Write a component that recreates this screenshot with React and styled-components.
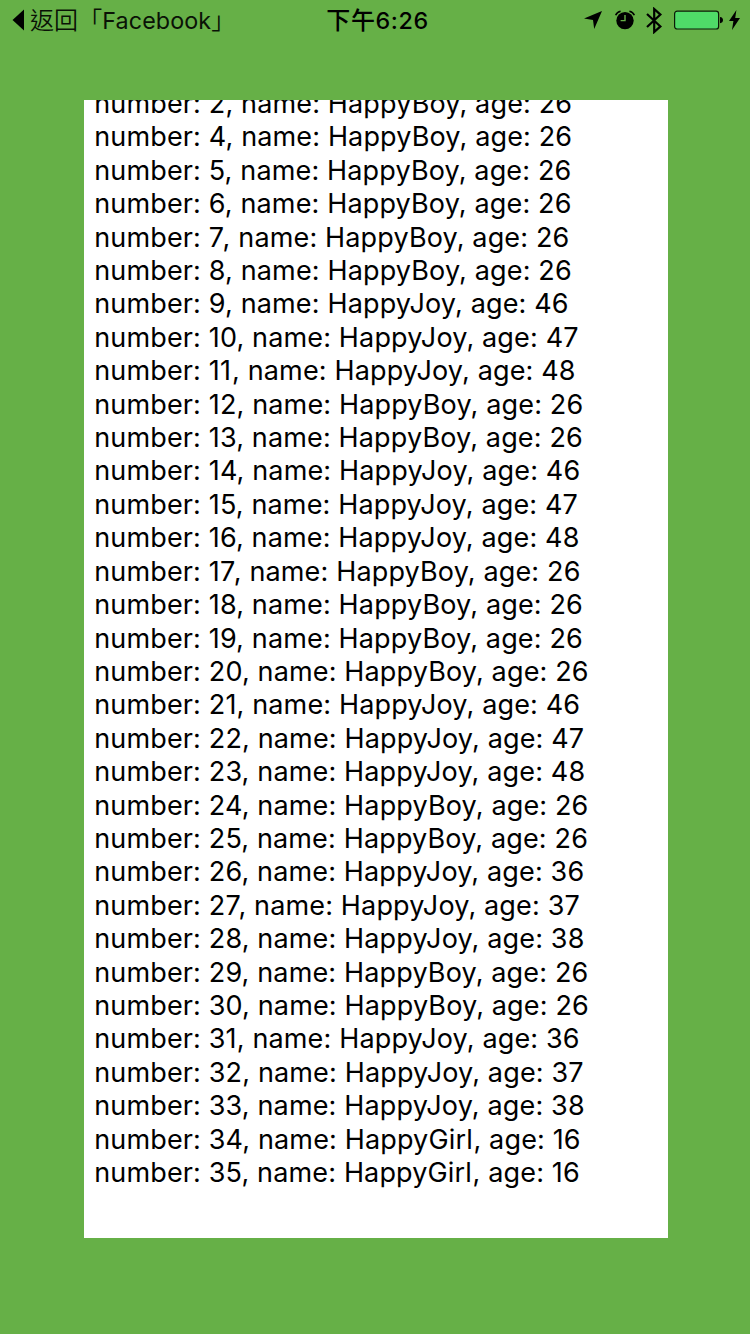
import React from 'react';
import styled, { createGlobalStyle } from 'styled-components';

const GlobalStyle = createGlobalStyle`
  html, body { margin: 0; padding: 0; }
  body { background: #66b047; }
`;

const Screen = styled.div`
  box-sizing: border-box;
  width: 750px;
  height: 1334px;
  overflow: hidden;
  background: #66b047;
  color: #000;
  font-family: Inter, "Noto Sans CJK TC", sans-serif;
`;

const StatusBar = styled.header`
  box-sizing: border-box;
  display: grid;
  grid-template-columns: 1fr auto 1fr;
  align-items: center;
  height: 40px;
  padding: 0 10px 0 12px;
`;

const BackLink = styled.div`
  display: flex;
  align-items: center;
  gap: 6px;
  height: 40px;
  color: #0a1206;
  font-size: 23.3px;
  font-weight: 400;
  line-height: 38px;
  letter-spacing: 0.1px;
  white-space: nowrap;
`;

const BackLabel = styled.span`
  height: 40px;
`;

const Han = styled.span`
  font-family: "Noto Sans CJK TC", sans-serif;
  font-weight: ${(p) => p.$weight};
  font-size: 24px;
`;

const Clock = styled.div`
  height: 40px;
  padding-left: 3px;
  font-size: 23.3px;
  font-weight: 550;
  line-height: 38px;
  letter-spacing: 0.6px;
  white-space: nowrap;
`;

const Indicators = styled.div`
  display: flex;
  align-items: center;
  justify-content: flex-end;
  height: 40px;
`;

const Glyph = styled.svg`
  display: block;
  flex: none;
  margin-left: ${(p) => p.$gap || 0}px;
`;

const Log = styled.main`
  box-sizing: border-box;
  display: flex;
  flex-direction: column;
  justify-content: flex-end;
  width: 584px;
  height: 1138px;
  margin: 60px 0 0 84px;
  padding: 0 10px 48.6px;
  overflow: hidden;
  background: #fff;
`;

const Entry = styled.div`
  flex: none;
  height: 33.42px;
  padding-left: 0.2px;
  font-size: 27px;
  line-height: 33.42px;
  letter-spacing: 0.15px;
  white-space: pre;
`;

const Field = styled.span`
  margin-right: ${(p) => p.$trail || 0}px;
`;

const records = [
  [2, 'HappyBoy', 26], [4, 'HappyBoy', 26], [5, 'HappyBoy', 26], [6, 'HappyBoy', 26],
  [7, 'HappyBoy', 26], [8, 'HappyBoy', 26], [9, 'HappyJoy', 46], [10, 'HappyJoy', 47],
  [11, 'HappyJoy', 48], [12, 'HappyBoy', 26], [13, 'HappyBoy', 26], [14, 'HappyJoy', 46],
  [15, 'HappyJoy', 47], [16, 'HappyJoy', 48], [17, 'HappyBoy', 26], [18, 'HappyBoy', 26],
  [19, 'HappyBoy', 26], [20, 'HappyBoy', 26], [21, 'HappyJoy', 46], [22, 'HappyJoy', 47],
  [23, 'HappyJoy', 48], [24, 'HappyBoy', 26], [25, 'HappyBoy', 26], [26, 'HappyJoy', 36],
  [27, 'HappyJoy', 37], [28, 'HappyJoy', 38], [29, 'HappyBoy', 26], [30, 'HappyBoy', 26],
  [31, 'HappyJoy', 36], [32, 'HappyJoy', 37], [33, 'HappyJoy', 38], [34, 'HappyGirl', 16],
  [35, 'HappyGirl', 16],
];

function trailFor(number) {
  if (number % 10 === 7) return number === 27 ? -2.4 : -1.6;
  if (number === 11) return 1;
  return 0;
}

function LocationIcon() {
  return (
    <Glyph width="18" height="18" viewBox="0 0 18 18">
      <path d="M18 0 L10.2 18 L9 9 L0 7.6 Z" fill="#000" />
    </Glyph>
  );
}

function AlarmIcon() {
  return (
    <Glyph $gap={13} width="20" height="20" viewBox="0 0 20 20">
      <circle cx="10" cy="10.6" r="8.7" fill="#000" />
      <path d="M0.7 5.2 Q2 2 5.6 1.3 M19.3 5.2 Q18 2 14.4 1.3" fill="none" stroke="#000" strokeWidth="1.6" />
      <path d="M10 5 V10.6 H5.6" fill="none" stroke="#66b047" strokeWidth="1.4" />
    </Glyph>
  );
}

function BluetoothIcon() {
  return (
    <Glyph $gap={11} width="17" height="27" viewBox="0 0 17 27">
      <path d="M1 7 L14.4 19.4 L8.2 25 V2 L14.4 7.6 L1 20" fill="none" stroke="#000" strokeWidth="2.2" />
    </Glyph>
  );
}

function BatteryIcon() {
  return (
    <Glyph $gap={11} width="49" height="20" viewBox="0 0 49 20">
      <rect x="0.6" y="1.2" width="44" height="17.8" rx="2.6" fill="#4fdb68" stroke="#0b1a08" strokeWidth="1.2" />
      <path d="M46 7 Q49 7.4 49 10.1 Q49 12.8 46 13.2 Z" fill="#000" />
    </Glyph>
  );
}

function BoltIcon() {
  return (
    <Glyph $gap={6} width="11" height="20" viewBox="0 0 11 20">
      <path d="M7.4 0 L0 11 H4.4 L3 20 L11 8 H6.2 Z" fill="#000" />
    </Glyph>
  );
}

export default function App() {
  return (
    <>
      <GlobalStyle />
      <Screen>
        <StatusBar>
          <BackLink>
            <Glyph width="12" height="22" viewBox="0 0 12 22">
              <path d="M12 0.5 V21.5 L0.5 11 Z" fill="#000" />
            </Glyph>
            <BackLabel>
              <Han $weight={350}>返回「</Han>Facebook<Han $weight={350}>」</Han>
            </BackLabel>
          </BackLink>
          <Clock><Han $weight={500}>下午</Han>6:26</Clock>
          <Indicators>
            <LocationIcon />
            <AlarmIcon />
            <BluetoothIcon />
            <BatteryIcon />
            <BoltIcon />
          </Indicators>
        </StatusBar>
        <Log>
          {records.map(([number, name, age]) => (
            <Entry key={number}>
              <Field $trail={trailFor(number)}>{`number: ${number}`}</Field>
              <Field $trail={name === 'HappyGirl' ? 0.6 : 0}>{`, name: ${name}`}</Field>
              <Field>{`, age: ${age}`}</Field>
            </Entry>
          ))}
        </Log>
      </Screen>
    </>
  );
}
